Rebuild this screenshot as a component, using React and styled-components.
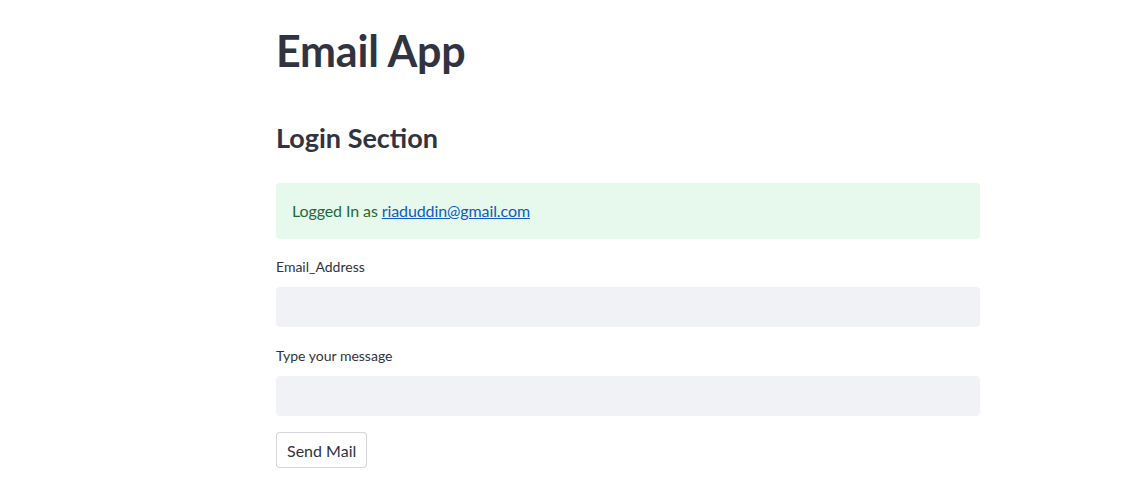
import React from 'react';
import styled, { createGlobalStyle } from 'styled-components';

const GlobalStyle = createGlobalStyle`
  body {
    margin: 0;
    background: #ffffff;
    font-family: Lato, "Noto Sans", sans-serif;
    color: #31333f;
  }
`;

const Main = styled.main`
  width: 704px;
  margin-left: 276px;
  padding-top: 25px;
  display: flex;
  flex-direction: column;
`;

const Title = styled.h1`
  margin: 0;
  font-size: 43px;
  line-height: 52px;
  font-weight: 700;
  letter-spacing: -0.2px;
`;

const Subtitle = styled.h2`
  margin: 43px 0 0;
  font-size: 27px;
  line-height: 36px;
  font-weight: 700;
`;

const Alert = styled.div`
  margin-top: 27px;
  background: #e7f8ec;
  color: #1f6a3a;
  border-radius: 4px;
  padding: 16px;
  font-size: 16px;
  line-height: 24px;
  letter-spacing: -0.1px;

  a {
    color: #0b5cc4;
    text-decoration: underline;
  }
`;

const Field = styled.div`
  margin-top: ${({ $gap }) => $gap || 16}px;
  display: flex;
  flex-direction: column;
  gap: 8px;
`;

const Label = styled.label`
  font-size: 14px;
  line-height: 24px;
  color: #31333f;
`;

const Input = styled.input`
  height: 40px;
  border: none;
  border-radius: 4px;
  background: #f0f2f6;
  padding: 0 12px;
  font: inherit;
  outline: none;
`;

const Button = styled.button`
  margin-top: 16px;
  align-self: flex-start;
  height: 36px;
  padding: 0 10px;
  background: #ffffff;
  border: 1px solid rgba(49, 51, 63, 0.2);
  border-radius: 4px;
  font-family: Lato, "Noto Sans", sans-serif;
  font-size: 16px;
  color: #31333f;
  cursor: pointer;
`;

export default function App() {
  return (
    <>
      <GlobalStyle />
      <Main>
        <Title>Email App</Title>
        <Subtitle>Login Section</Subtitle>
        <Alert>
          Logged In as <a href="mailto:riaduddin@gmail.com">riaduddin@gmail.com</a>
        </Alert>
        <Field>
          <Label>Email_Address</Label>
          <Input type="text" />
        </Field>
        <Field $gap={17}>
          <Label>Type your message</Label>
          <Input type="text" />
        </Field>
        <Button>Send Mail</Button>
      </Main>
    </>
  );
}
